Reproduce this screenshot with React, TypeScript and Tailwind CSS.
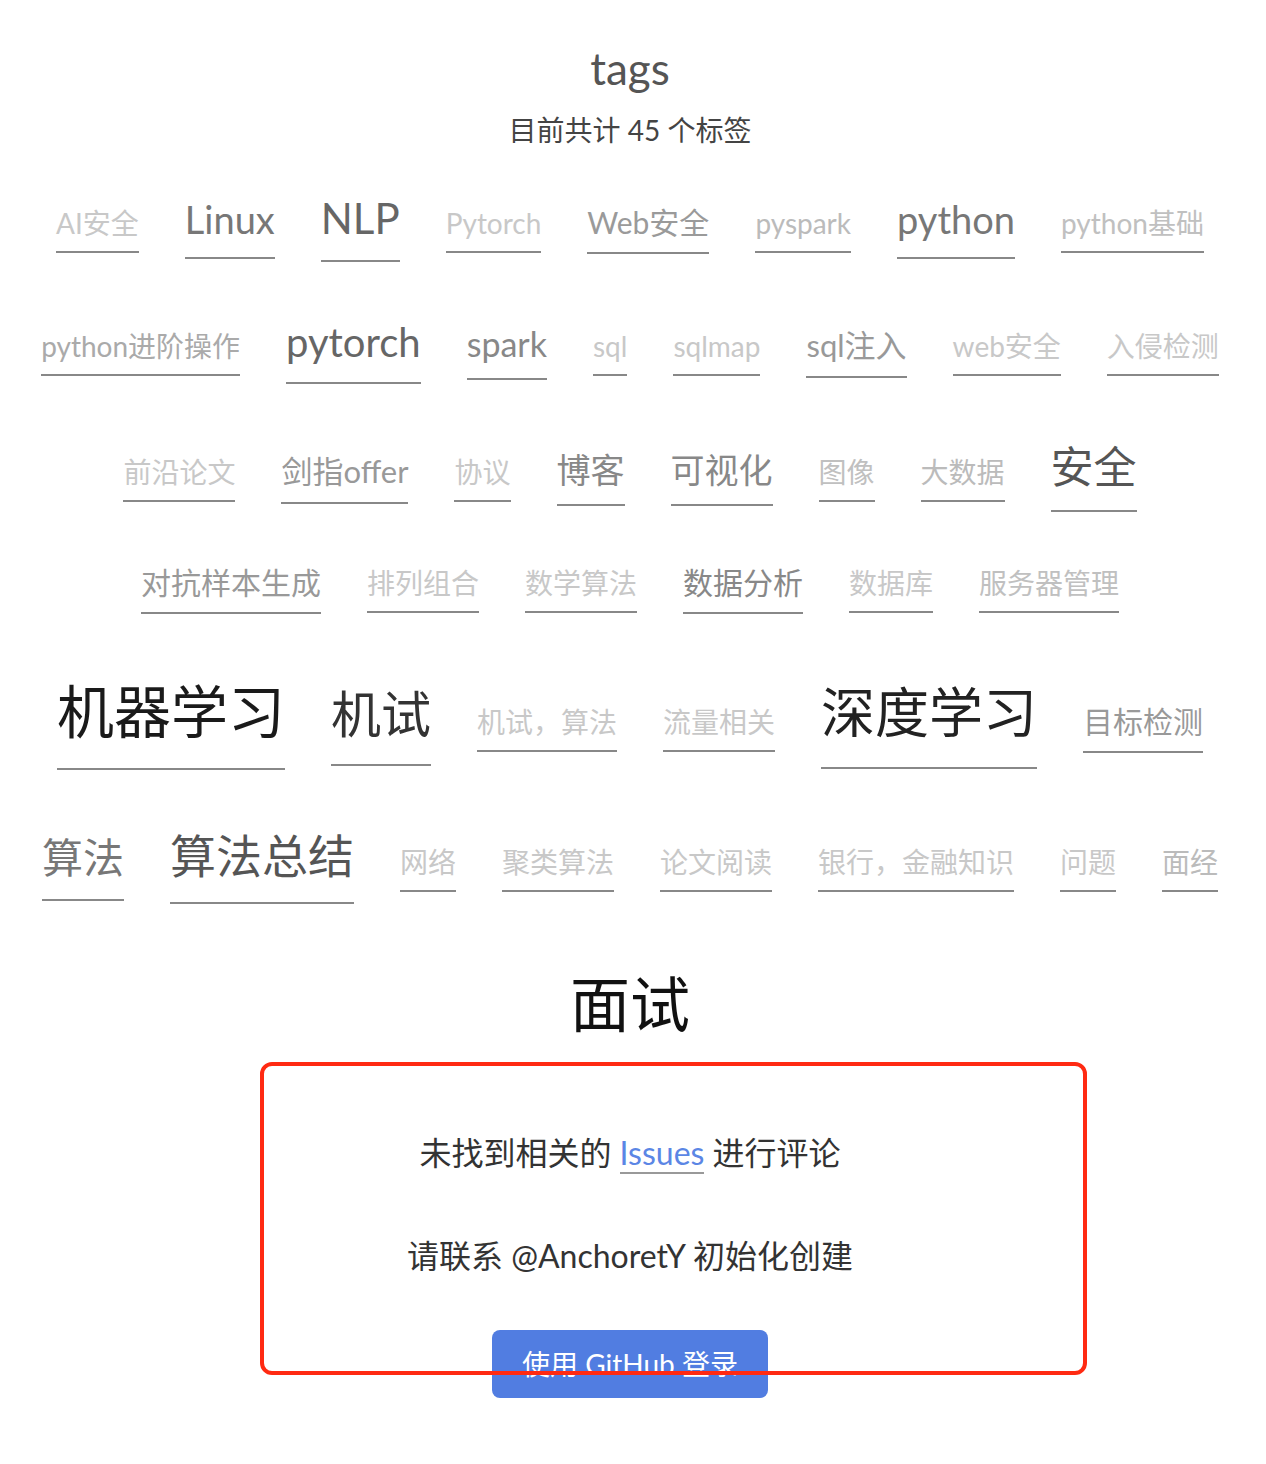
import React from 'react';

interface Tag {
  name: string;
  cls: string;
}

// tag cloud: size + colour per tag, grouped roughly as in the screenshot
const tags: Tag[] = [
  { name: 'AI安全', cls: 'text-[28px] text-[#c8c8c8]' },
  { name: 'Linux', cls: 'text-[38px] text-[#777]' },
  { name: 'NLP', cls: 'text-[42px] text-[#666]' },
  { name: 'Pytorch', cls: 'text-[28px] text-[#c8c8c8]' },
  { name: 'Web安全', cls: 'text-[30px] text-[#9a9a9a]' },
  { name: 'pyspark', cls: 'text-[28px] text-[#bbb]' },
  { name: 'python', cls: 'text-[38px] text-[#777]' },
  { name: 'python基础', cls: 'text-[28px] text-[#c0c0c0]' },

  { name: 'python进阶操作', cls: 'text-[28px] text-[#aaa]' },
  { name: 'pytorch', cls: 'text-[40px] text-[#666]' },
  { name: 'spark', cls: 'text-[34px] text-[#888]' },
  { name: 'sql', cls: 'text-[28px] text-[#c8c8c8]' },
  { name: 'sqlmap', cls: 'text-[28px] text-[#c8c8c8]' },
  { name: 'sql注入', cls: 'text-[31px] text-[#999]' },
  { name: 'web安全', cls: 'text-[28px] text-[#c8c8c8]' },
  { name: '入侵检测', cls: 'text-[28px] text-[#c8c8c8]' },

  { name: '前沿论文', cls: 'text-[28px] text-[#c8c8c8]' },
  { name: '剑指offer', cls: 'text-[31px] text-[#999]' },
  { name: '协议', cls: 'text-[28px] text-[#c8c8c8]' },
  { name: '博客', cls: 'text-[34px] text-[#888]' },
  { name: '可视化', cls: 'text-[34px] text-[#888]' },
  { name: '图像', cls: 'text-[28px] text-[#c0c0c0]' },
  { name: '大数据', cls: 'text-[28px] text-[#bbb]' },
  { name: '安全', cls: 'text-[43px] text-[#555]' },

  { name: '对抗样本生成', cls: 'text-[30px] text-[#999]' },
  { name: '排列组合', cls: 'text-[28px] text-[#c8c8c8]' },
  { name: '数学算法', cls: 'text-[28px] text-[#c8c8c8]' },
  { name: '数据分析', cls: 'text-[30px] text-[#888]' },
  { name: '数据库', cls: 'text-[28px] text-[#c8c8c8]' },
  { name: '服务器管理', cls: 'text-[28px] text-[#c0c0c0]' },

  { name: '机器学习', cls: 'text-[57px] text-[#1a1a1a]' },
  { name: '机试', cls: 'text-[50px] text-[#333]' },
  { name: '机试，算法', cls: 'text-[28px] text-[#c8c8c8]' },
  { name: '流量相关', cls: 'text-[28px] text-[#c8c8c8]' },
  { name: '深度学习', cls: 'text-[54px] text-[#222]' },
  { name: '目标检测', cls: 'text-[30px] text-[#999]' },

  { name: '算法', cls: 'text-[41px] text-[#777]' },
  { name: '算法总结', cls: 'text-[46px] text-[#555]' },
  { name: '网络', cls: 'text-[28px] text-[#c8c8c8]' },
  { name: '聚类算法', cls: 'text-[28px] text-[#c8c8c8]' },
  { name: '论文阅读', cls: 'text-[28px] text-[#c8c8c8]' },
  { name: '银行，金融知识', cls: 'text-[28px] text-[#c8c8c8]' },
  { name: '问题', cls: 'text-[28px] text-[#c8c8c8]' },
  { name: '面经', cls: 'text-[28px] text-[#bbb]' },

  { name: '面试', cls: 'text-[60px] text-[#111]' },
];

const App: React.FC = () => {
  return (
    <div className="relative min-h-screen bg-white font-[Lato,'Noto_Sans_CJK_SC',sans-serif]">
      <div className="w-[1260px]">
        {/* Header */}
        <div className="pt-[40px] text-center">
          <h1 className="text-[44px] leading-[56px] text-[#555]">tags</h1>
          <p className="mt-[8px] text-[28px] leading-[52px] text-[#444]">目前共计 45 个标签</p>
        </div>

        {/* Tag cloud */}
        <div className="flex flex-wrap justify-center items-baseline">
          {tags.map((t) => (
            <a
              key={t.name}
              href="#"
              className={`${t.cls} mx-[23px] my-[20px] leading-[2] border-b-2 border-[#888]`}
            >
              {t.name}
            </a>
          ))}
        </div>

        {/* Comments */}
        <div className="pt-[43px] pb-[60px] flex flex-col items-center text-[32px] text-[#333]">
          <p className="leading-[48px]">
            未找到相关的{' '}
            <a href="#" className="text-[#5b86e5] border-b-2 border-[#999]">Issues</a>{' '}
            进行评论
          </p>
          <p className="mt-[55px] leading-[48px]">请联系 @AnchoretY 初始化创建</p>
          <button className="mt-[50px] w-[276px] h-[68px] rounded-[8px] bg-[#517de1] text-white text-[28px] flex items-center justify-center">
            使用 GitHub 登录
          </button>
        </div>
      </div>

      {/* red annotation frame */}
      <div className="absolute left-[260px] top-[1062px] w-[827px] h-[313px] border-[4px] border-[#ff2a12] rounded-[12px] pointer-events-none" />
    </div>
  );
};

export default App;
